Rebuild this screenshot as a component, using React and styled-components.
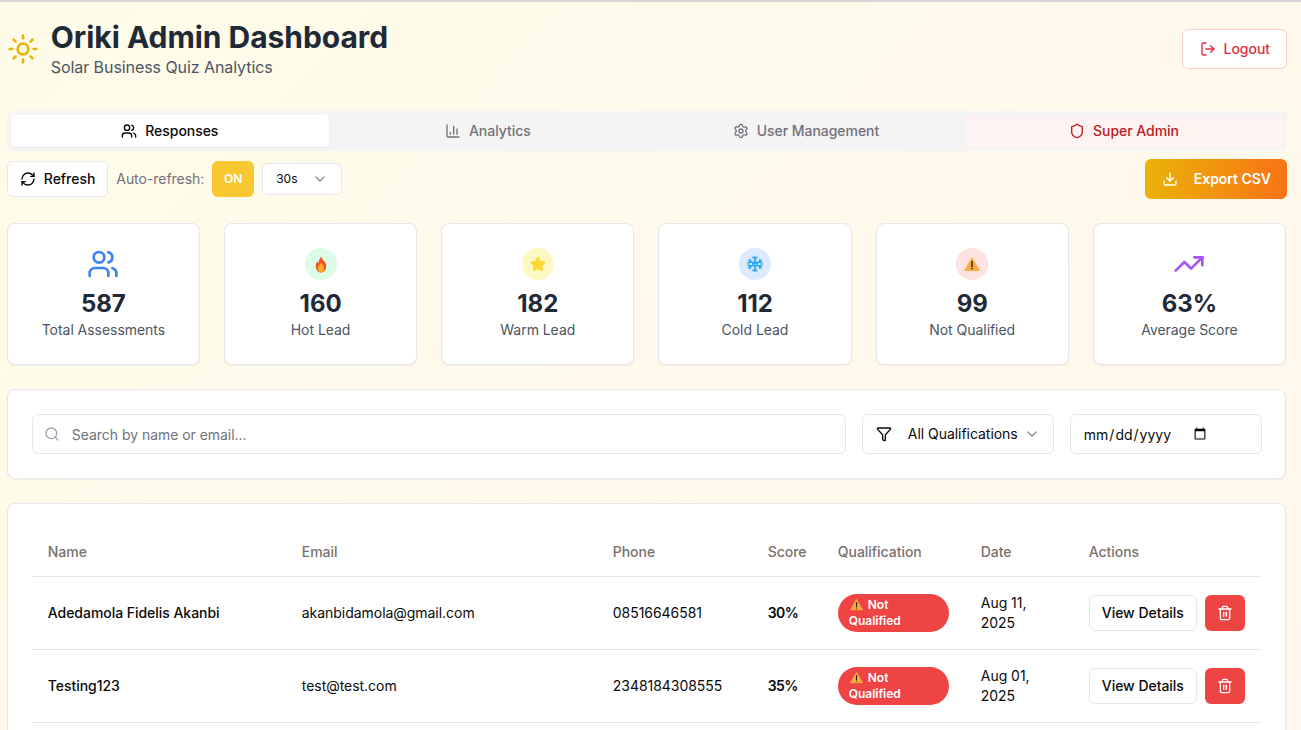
import React from 'react';
import styled, { createGlobalStyle } from 'styled-components';
import {
  BarChart3,
  ChevronDown,
  Download,
  Filter,
  LogOut,
  RefreshCw,
  Search,
  Settings,
  Shield,
  Sun,
  Trash2,
  TrendingUp,
  Users,
} from 'lucide-react';

const GlobalStyle = createGlobalStyle`
  html, body {
    margin: 0;
    padding: 0;
    height: 100%;
    overflow: hidden;
  }
  * { box-sizing: border-box; }
  body {
    font-family: Inter, "Liberation Sans", sans-serif;
    letter-spacing: -0.04px;
    color: #0a0a0a;
  }
`;

const Page = styled.div`
  height: 730px;
  overflow: hidden;
  border-top: 2px solid #d6d6d6;
  padding: 17px 15px 0 6.8px;
  background: linear-gradient(135deg, #fefce8 0%, #fff7ed 100%);
`;

const Header = styled.header`
  display: flex;
  align-items: center;
  justify-content: space-between;
  margin-bottom: 32px;
`;

const Brand = styled.div`
  display: flex;
  align-items: center;
  gap: 12px;
`;

const Title = styled.h1`
  margin: 0;
  font-size: 30px;
  line-height: 36px;
  font-weight: 700;
  color: #1f2937;
`;

const Subtitle = styled.p`
  margin: 0;
  font-size: 16px;
  line-height: 24px;
  letter-spacing: -0.07px;
  color: #4b5563;
`;

const Button = styled.button`
  display: inline-flex;
  align-items: center;
  justify-content: center;
  gap: 8px;
  height: 36px;
  padding: 0 12px;
  border: 1px solid #e5e7eb;
  border-radius: 6px;
  background: #fff;
  color: #0a0a0a;
  font-family: inherit;
  font-size: 14px;
  line-height: 20px;
  letter-spacing: inherit;
  font-weight: 500;
  white-space: nowrap;
`;

const LogoutButton = styled(Button)`
  height: 40px;
  padding: 0 16px 0 17px;
  margin-right: -1px;
  border-color: #fecaca;
  color: #dc2f3c;
`;

const Tabs = styled.nav`
  display: grid;
  grid-template-columns: repeat(4, 1fr);
  height: 40px;
  padding: 4px;
  margin: 0 -1px 8px 0;
  border-radius: 6px;
  background: #f4f4f5;
`;

const Tab = styled.div`
  display: flex;
  align-items: center;
  justify-content: center;
  gap: 8px;
  border-radius: 4px;
  font-size: 14px;
  line-height: 20px;
  font-weight: 500;
  color: ${(p) => (p.$danger ? '#b91c1c' : p.$active ? '#0a0a0a' : '#71717a')};
  background: ${(p) => (p.$danger ? '#fef2f2' : p.$active ? '#fff' : 'transparent')};
  box-shadow: ${(p) => (p.$active ? '0 1px 2px rgba(0, 0, 0, 0.05)' : 'none')};
`;

const Toolbar = styled.div`
  display: flex;
  align-items: center;
  justify-content: space-between;
  margin-bottom: 24px;
`;

const ToolGroup = styled.div`
  display: flex;
  align-items: center;
  gap: 8px;
`;

const AutoLabel = styled.span`
  font-size: 14px;
  line-height: 20px;
  color: #71717a;
`;

const ToggleButton = styled(Button)`
  width: 42px;
  padding: 0;
  border: none;
  background: #f9c72f;
  color: #fff;
  font-size: 12px;
  font-weight: 600;
`;

const IntervalSelect = styled.div`
  display: flex;
  align-items: center;
  justify-content: space-between;
  width: 80px;
  height: 32px;
  padding: 0 13px;
  border: 1px solid #e5e7eb;
  border-radius: 6px;
  background: #fff;
  font-size: 12px;
  line-height: 16px;

  svg { color: #8a8a8a; }
`;

const ExportButton = styled(Button)`
  height: 40px;
  padding: 0 16px 0 17px;
  margin-right: -1px;
  gap: 16px;
  border: none;
  background: linear-gradient(90deg, #eab308, #f97316);
  color: #fff;
  font-weight: 600;
`;

const StatGrid = styled.section`
  display: grid;
  grid-template-columns: repeat(6, 1fr);
  gap: 24px;
  margin-bottom: 24px;
`;

const Card = styled.div`
  border: 1px solid #e5e7eb;
  border-radius: 8px;
  background: #fff;
  box-shadow: 0 1px 2px rgba(0, 0, 0, 0.05);
`;

const StatCard = styled(Card)`
  display: flex;
  flex-direction: column;
  align-items: center;
  padding: 24px;
`;

const StatIcon = styled.div`
  display: flex;
  align-items: center;
  justify-content: center;
  width: 32px;
  height: 32px;
  margin-bottom: 8px;
  border-radius: 50%;
  background: ${(p) => p.$tint || 'transparent'};
`;

const StatValue = styled.div`
  font-size: 24px;
  line-height: 32px;
  font-weight: 700;
  color: #1f2937;
`;

const StatLabel = styled.div`
  font-size: 14px;
  line-height: 20px;
  color: #4b5563;
`;

const FilterCard = styled(Card)`
  display: flex;
  gap: 16px;
  padding: 24px 23.2px 24px 24px;
  margin-bottom: 24px;
`;

const SearchBox = styled.label`
  flex: 1;
  display: flex;
  align-items: center;
  gap: 12px;
  height: 40px;
  padding: 0 12px 0 11px;
  border: 1px solid #e5e7eb;
  border-radius: 6px;
  background: #fff;

  svg { color: #9ca3af; flex-shrink: 0; }
`;

const SearchInput = styled.input`
  flex: 1;
  min-width: 0;
  padding: 0;
  border: none;
  outline: none;
  background: transparent;
  font-family: inherit;
  font-size: 14px;
  letter-spacing: inherit;
  color: #0a0a0a;

  &::placeholder { color: #71717a; }
`;

const QualSelect = styled.div`
  display: flex;
  align-items: center;
  gap: 8px;
  width: 192px;
  height: 40px;
  padding: 0 13px;
  border: 1px solid #e5e7eb;
  border-radius: 6px;
  background: #fff;
  font-size: 14px;
  line-height: 20px;

  svg { flex-shrink: 0; }
  > span { flex: 1; min-width: 0; margin-left: 8px; white-space: nowrap; }
  > svg:last-child { color: #8a8a8a; }
`;

const DateInput = styled.input`
  width: 192px;
  height: 40px;
  padding: 0 52px 0 12px;
  border: 1px solid #e5e7eb;
  border-radius: 6px;
  background: #fff;
  font-family: inherit;
  font-size: 14px;
  color: #0a0a0a;
`;

const TableCard = styled(Card)`
  padding: 24px 23.2px 24px 24px;
`;

const Table = styled.table`
  width: 100%;
  table-layout: fixed;
  border-collapse: collapse;
  font-size: 14px;
`;

const HeadCell = styled.th`
  height: 48px;
  padding: 0 16px;
  border-bottom: 1px solid #e5e7eb;
  text-align: left;
  font-weight: 500;
  color: #78716c;
`;

const Row = styled.tr`
  border-bottom: 1px solid #e5e7eb;
`;

const Cell = styled.td`
  padding: 16px;
  line-height: 20px;
  vertical-align: middle;
  font-weight: ${(p) => p.$weight || 400};
`;

const ScoreCell = styled(Cell)`
  font-weight: 600;
  letter-spacing: -0.6px;
`;

const Badge = styled.span`
  display: block;
  width: 111px;
  padding: 3px 11px;
  border-radius: 999px;
  background: #ef4444;
  color: #fff;
  font-size: 12px;
  line-height: 16px;
  font-weight: 600;

  svg { vertical-align: -2px; margin: 0 5px 0 1px; }
`;

const Actions = styled.div`
  display: flex;
  align-items: center;
  gap: 8px;
`;

const DeleteButton = styled(Button)`
  width: 40px;
  padding: 0;
  border: none;
  background: #ef4444;
  color: #fff;
`;

const FlameEmoji = () => (
  <svg width="16" height="17" viewBox="0 0 16 17">
    <path d="M8.300.4c.3 2.200 1.700 3.300 3 4.900 1.100 1.300 1.900 2.800 1.900 4.700 0 3.800-2.300 6.600-5.200 6.600S2.800 13.800 2.800 10c0-2 .8-3.700 1.800-4.800.2 1 .6 1.700 1.200 2.100C5.600 4.900 6.800 2.200 8.300.4z" fill="#f4511e" />
    <path d="M8.100 6.600c.6 1.400 3.200 2.900 3.200 5.800 0 2.300-1.500 3.800-3.300 3.800s-3.300-1.500-3.300-3.800c0-2.800 2.800-4.100 3.400-5.800z" fill="#ffa726" />
  </svg>
);

const StarEmoji = () => (
  <svg width="16" height="16" viewBox="0 0 16 16">
    <path
      d="M8 1.700l2 4.100 4.500.6-3.300 3.100.8 4.500-4-2.200-4 2.200.8-4.500-3.300-3.100 4.500-.6z"
      fill="#fdd835"
      stroke="#fdd835"
      strokeWidth="2"
      strokeLinejoin="round"
    />
  </svg>
);

const SnowEmoji = () => (
  <svg width="16" height="16" viewBox="0 0 16 16" fill="none" stroke="#29a9f0" strokeWidth="1.400" strokeLinecap="round">
    <path d="M8 .6v14.800M1.500 4.300l13 7.400M14.500 4.300l-13 7.400" />
    <path d="M5.900 1.300L8 3.300l2.100-2M5.900 14.700L8 12.700l2.100 2M.9 7l2.900-.8-.7-2.800M15.100 9l-2.900.8.700 2.800M15.100 7l-2.900-.8.700-2.800M.9 9l2.900.8-.7 2.800" />
    <path d="M8 5.400l2.300 1.300v2.600L8 10.600 5.700 9.300V6.700z" />
  </svg>
);

const WarnEmoji = ({ size = 16 }) => (
  <svg width={size} height={size} viewBox="0 0 16 16">
    <path d="M8 1.800l7.300 12.700H.7z" fill="#fbab3a" stroke="#fbab3a" strokeWidth="1" strokeLinejoin="round" />
    <path d="M8 5.600v4.800" stroke="#212121" strokeWidth="1.400" strokeLinecap="round" />
    <circle cx="8" cy="12.400" r=".85" fill="#212121" />
  </svg>
);

const stats = [
  { value: '587', label: 'Total Assessments', icon: <Users size={32} color="#3b82f6" /> },
  { value: '160', label: 'Hot Lead', tint: '#dcfce7', icon: <FlameEmoji /> },
  { value: '182', label: 'Warm Lead', tint: '#fef9c3', icon: <StarEmoji /> },
  { value: '112', label: 'Cold Lead', tint: '#dbeafe', icon: <SnowEmoji /> },
  { value: '99', label: 'Not Qualified', tint: '#fee2e2', icon: <WarnEmoji /> },
  { value: '63%', label: 'Average Score', icon: <TrendingUp size={32} color="#a855f7" /> },
];

const columns = [
  { label: 'Name', width: 254 },
  { label: 'Email', width: 311 },
  { label: 'Phone', width: 155 },
  { label: 'Score', width: 70 },
  { label: 'Qualification', width: 143 },
  { label: 'Date', width: 108 },
  { label: 'Actions', width: 189 },
];

const responses = [
  {
    name: 'Adedamola Fidelis Akanbi',
    email: 'akanbidamola@gmail.com',
    phone: '08516646581',
    score: '30%',
    date: 'Aug 11, 2025',
  },
  {
    name: 'Testing123',
    email: 'test@test.com',
    phone: '2348184308555',
    score: '35%',
    date: 'Aug 01, 2025',
  },
];

export default function App() {
  return (
    <Page>
      <GlobalStyle />
      <Header>
        <Brand>
          <Sun size={32} color="#eab308" />
          <div>
            <Title>Oriki Admin Dashboard</Title>
            <Subtitle>Solar Business Quiz Analytics</Subtitle>
          </div>
        </Brand>
        <LogoutButton>
          <LogOut size={16} />
          Logout
        </LogoutButton>
      </Header>

      <Tabs>
        <Tab $active>
          <Users size={16} />
          Responses
        </Tab>
        <Tab>
          <BarChart3 size={16} />
          Analytics
        </Tab>
        <Tab>
          <Settings size={16} />
          User Management
        </Tab>
        <Tab $danger>
          <Shield size={16} />
          Super Admin
        </Tab>
      </Tabs>

      <Toolbar>
        <ToolGroup>
          <Button>
            <RefreshCw size={16} />
            Refresh
          </Button>
          <AutoLabel>Auto-refresh:</AutoLabel>
          <ToggleButton>ON</ToggleButton>
          <IntervalSelect>
            30s
            <ChevronDown size={16} />
          </IntervalSelect>
        </ToolGroup>
        <ExportButton>
          <Download size={16} />
          Export CSV
        </ExportButton>
      </Toolbar>

      <StatGrid>
        {stats.map((s) => (
          <StatCard key={s.label}>
            <StatIcon $tint={s.tint}>{s.icon}</StatIcon>
            <StatValue>{s.value}</StatValue>
            <StatLabel>{s.label}</StatLabel>
          </StatCard>
        ))}
      </StatGrid>

      <FilterCard>
        <SearchBox>
          <Search size={16} />
          <SearchInput placeholder="Search by name or email..." />
        </SearchBox>
        <QualSelect>
          <Filter size={16} />
          <span>All Qualifications</span>
          <ChevronDown size={16} />
        </QualSelect>
        <DateInput type="date" />
      </FilterCard>

      <TableCard>
        <Table>
          <colgroup>
            {columns.map((c) => (
              <col key={c.label} width={c.width} />
            ))}
          </colgroup>
          <thead>
            <tr>
              {columns.map((c) => (
                <HeadCell key={c.label}>{c.label}</HeadCell>
              ))}
            </tr>
          </thead>
          <tbody>
            {responses.map((r) => (
              <Row key={r.email}>
                <Cell $weight={500}>{r.name}</Cell>
                <Cell>{r.email}</Cell>
                <Cell>{r.phone}</Cell>
                <ScoreCell>{r.score}</ScoreCell>
                <Cell>
                  <Badge>
                    <WarnEmoji size={13} />
                    Not Qualified
                  </Badge>
                </Cell>
                <Cell>{r.date}</Cell>
                <Cell>
                  <Actions>
                    <Button>View Details</Button>
                    <DeleteButton>
                      <Trash2 size={16} />
                    </DeleteButton>
                  </Actions>
                </Cell>
              </Row>
            ))}
          </tbody>
        </Table>
      </TableCard>
    </Page>
  );
}
